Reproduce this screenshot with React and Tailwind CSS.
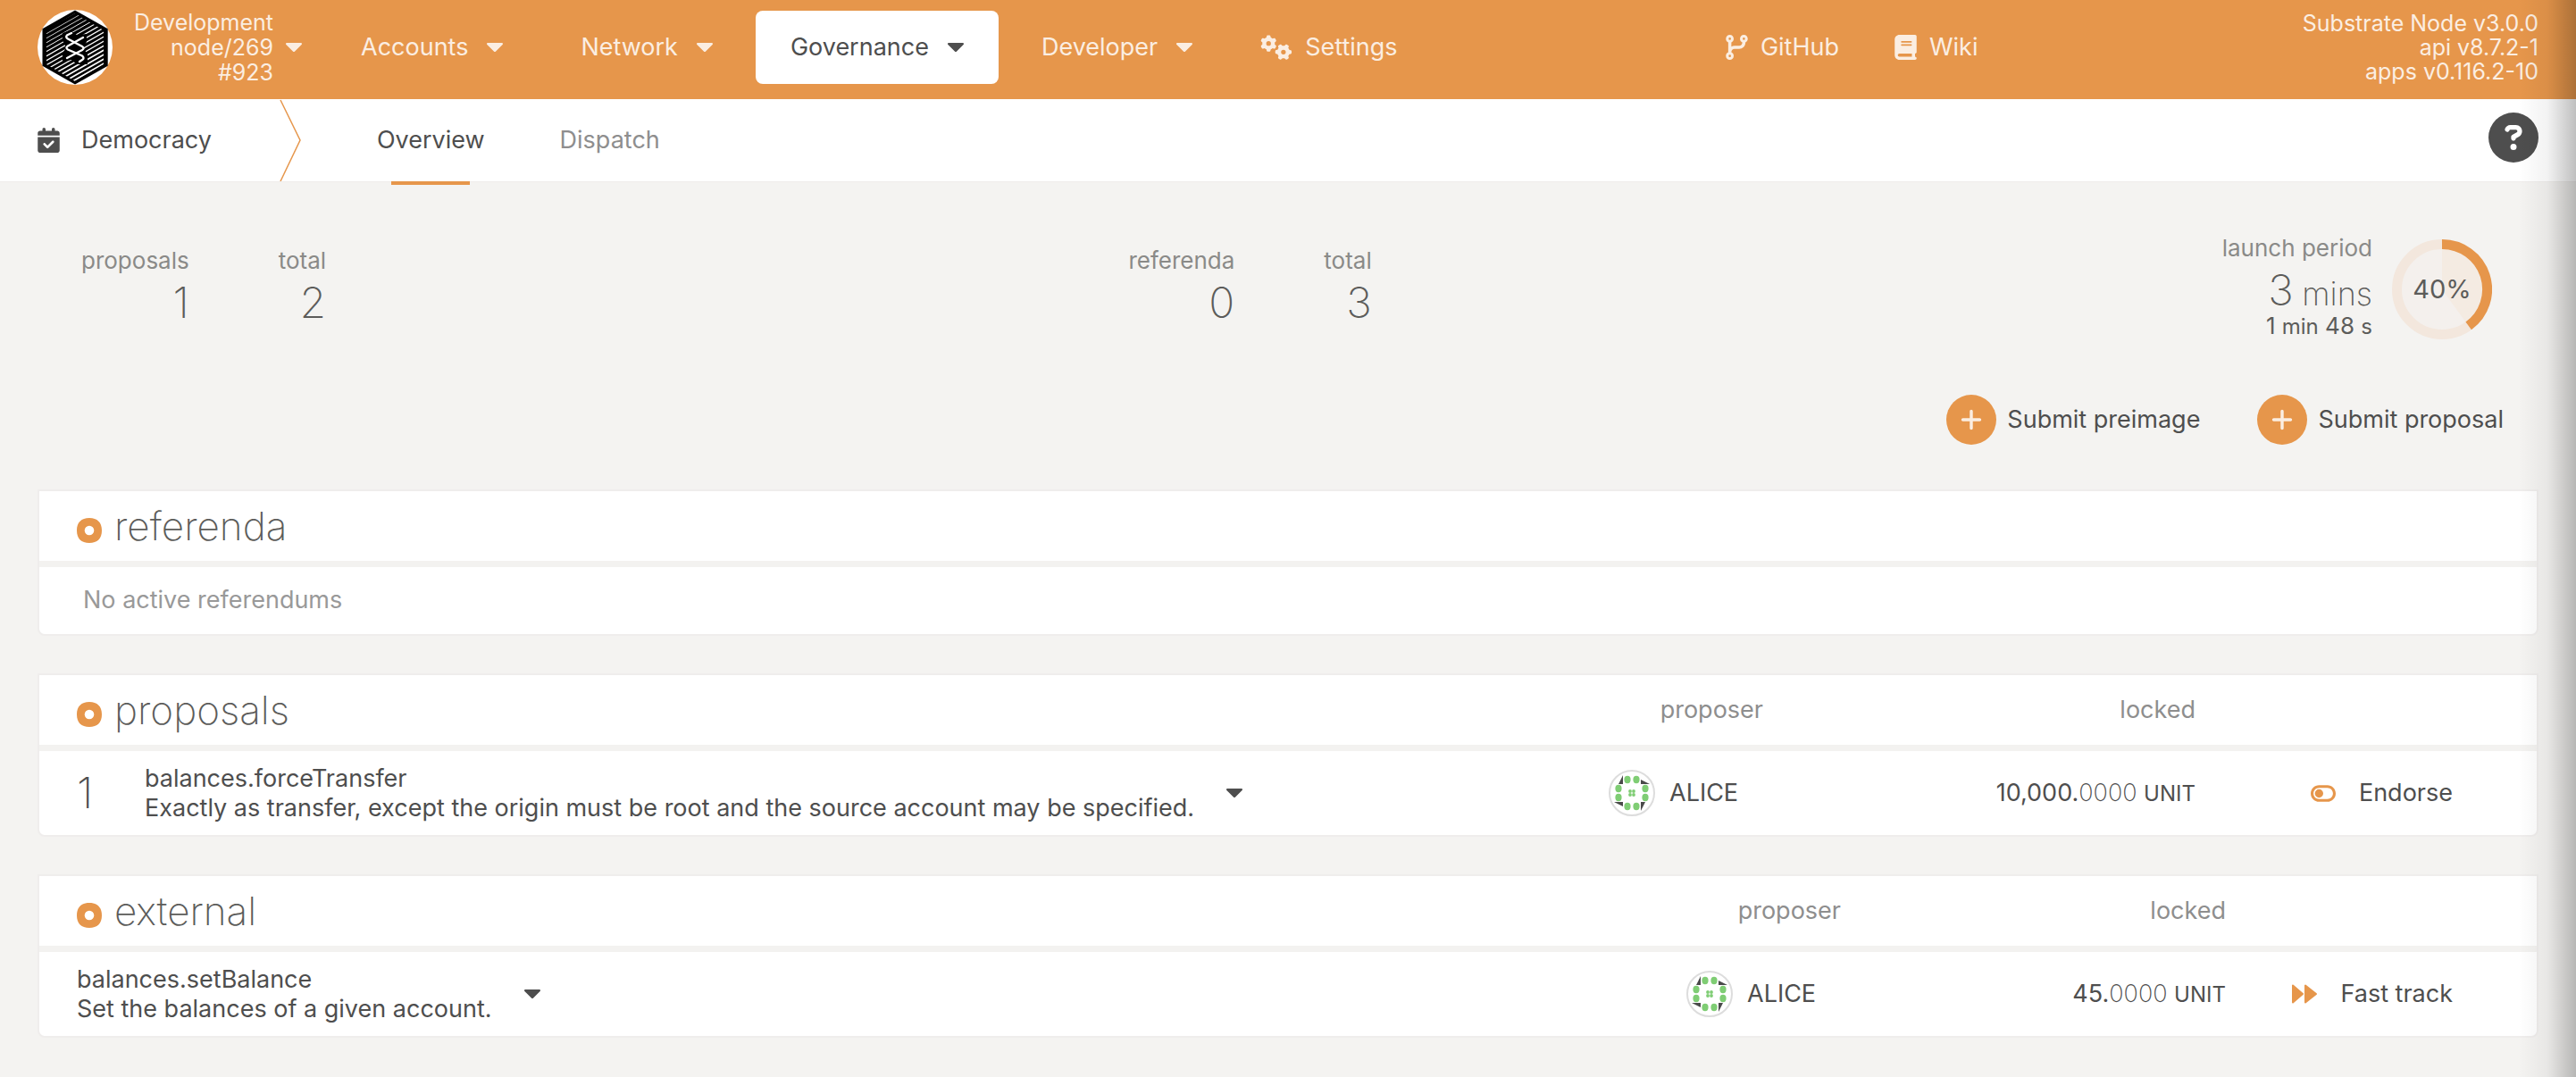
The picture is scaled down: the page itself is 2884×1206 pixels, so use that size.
import {
  FaBook,
  FaCalendarCheck,
  FaCircleQuestion,
  FaCodeBranch,
  FaGears,
  FaPlus,
  FaToggleOff,
} from 'react-icons/fa6';

const MENU = [
  { label: 'Accounts' },
  { label: 'Network' },
  { label: 'Governance', active: true },
  { label: 'Developer' },
];

function Caret() {
  return (
    <svg className="h-2.5 w-[18px] shrink-0 fill-current" viewBox="11 192 298 169" preserveAspectRatio="none" aria-hidden="true">
      <path d="M31.3 192h257.3c17.8 0 26.7 21.5 14.1 34.1L174.1 354.8c-7.8 7.8-20.5 7.8-28.3 0L17.2 226.1C4.6 213.5 13.5 192 31.3 192z" />
    </svg>
  );
}

function FastForward() {
  return (
    <svg className="h-[22px] w-7 shrink-0" viewBox="0 0 28 22" fill="#e6964b" stroke="#e6964b" strokeWidth="2" strokeLinejoin="round" aria-hidden="true">
      <path d="M1 1.5V20.5L12 11ZM15 1.5V20.5L27 11Z" />
    </svg>
  );
}

function Logo() {
  const stripes = Array.from({ length: 23 }, (_, i) => i);
  return (
    <svg className="size-[84px] shrink-0" viewBox="0 0 84 84" aria-hidden="true">
      <defs>
        <clipPath id="logo-hex">
          <path d="M42 4 74 23V61L42 80 10 61V23Z" />
        </clipPath>
      </defs>
      <circle cx="42" cy="42" r="42" fill="#fff" />
      <path d="M42 0.5 78.7 21.3V62.7L42 83.5 5.5 62.7V21.3Z" fill="#000" />
      <g clipPath="url(#logo-hex)" stroke="#fff">
        {stripes.map((i) => (
          <path key={i} d={`M6 ${14 + i * 5}L78 ${-27 + i * 5}`} strokeWidth={0.5 + i * 0.08} />
        ))}
      </g>
      <path d="M36 23 44 28 55 27V36L51 42 56 50V61H44L38 56 28 58V49L32 42 28 34V26Z" fill="#000" />
      <g fill="none" stroke="#fff" strokeWidth="2.4" strokeLinecap="round">
        <path d="M38 26 33 28.5Q31 30.5 34 32.5L50 41Q53 43 50 45L33 54" />
        <path d="M51 31 34 40.5Q31 42.5 34 44.5L50 51.5Q53 54 50 56L47 58" />
      </g>
    </svg>
  );
}

function Identicon() {
  const dots = [
    [21, 11], [31, 11], [41, 21], [41, 31],
    [31, 41], [21, 41], [11, 31], [11, 21],
  ];
  const core = [[24, 24], [28, 24], [24, 28], [28, 28]];
  return (
    <svg className="size-[52px] shrink-0" viewBox="0 0 52 52" aria-hidden="true">
      <circle cx="26" cy="26" r="25" fill="#fff" stroke="#ddd" strokeWidth="2" />
      <path d="M16 6V16H11ZM36 11 46 16H36ZM36 36H41L36 46ZM6 36H16V41Z" fill="#4a4a4a" />
      <g fill="#7fcd74">
        {dots.map(([x, y]) => <ellipse key={`${x}-${y}`} cx={x} cy={y} rx="3.6" ry="4.2" />)}
        {core.map(([x, y]) => <circle key={`${x}-${y}`} cx={x} cy={y} r="1.9" />)}
      </g>
    </svg>
  );
}

function Header() {
  return (
    <header className="flex items-center justify-between bg-[#e6964b] px-[42px] pt-[11px] pb-4 text-[#fbeee2]">
      <div className="flex items-center">
        <Logo />
        <button type="button" className="ml-3.5 flex items-center gap-3.5 text-right text-[25px] leading-7">
          <span className="w-[166px]">
            Development
            <br />
            node/269
            <br />
            #923
          </span>
          <Caret />
        </button>
        <nav className="ml-[27px] flex items-center gap-[9px]">
          {MENU.map(({ label, active }) => (
            <button
              key={label}
              type="button"
              className={
                active
                  ? 'flex h-[82px] items-center gap-[21px] rounded-lg bg-white px-[39px] text-[27px] text-[#4e4e4e]'
                  : 'flex h-[82px] items-center gap-[21px] px-[39px] text-[27px]'
              }
            >
              {label}
              <Caret />
            </button>
          ))}
          <a href="#settings" className="flex h-[82px] items-center gap-3.5 px-7 text-[27px]">
            <FaGears className="h-7 w-9" />
            Settings
          </a>
        </nav>
      </div>
      <div className="mr-6 flex items-center">
        <a href="#github" className="flex items-center gap-3.5 px-[31px] text-[27px]">
          <FaCodeBranch className="h-7 w-[25px]" />
          GitHub
        </a>
        <a href="#wiki" className="flex items-center gap-3.5 px-[31px] text-[27px]">
          <FaBook className="h-7 w-[25px]" />
          Wiki
        </a>
      </div>
      <div className="text-right text-[25px] leading-[27px]">
        Substrate Node v3.0.0
        <br />
        api v8.7.2-1
        <br />
        apps v0.116.2-10
      </div>
    </header>
  );
}

function TabBar() {
  return (
    <div className="flex h-[93px] items-center border-b border-[#efedeb] bg-white px-[42px] text-[27px] text-[#4e4e4e]">
      <FaCalendarCheck className="h-7 w-[25px]" />
      <h1 className="ml-6">Democracy</h1>
      <svg className="ml-[76px] h-full w-6" viewBox="0 0 24 92" fill="none" stroke="#e6964b" strokeWidth="1.5" aria-hidden="true">
        <path d="M1 1 23 46 1 92" />
      </svg>
      <nav className="ml-[43px] flex h-full">
        <a href="#overview" className="relative flex items-center px-[42px] after:absolute after:-bottom-1 after:left-1/2 after:h-1 after:w-[88px] after:-translate-x-1/2 after:bg-[#e6964b]">
          Overview
        </a>
        <a href="#dispatch" className="flex items-center px-[42px] text-[#8e8e8e]">Dispatch</a>
      </nav>
      <button type="button" aria-label="Help" className="mb-1.5 ml-auto">
        <FaCircleQuestion className="size-14" />
      </button>
    </div>
  );
}

function Stat({ label, value }) {
  return (
    <div className="text-right">
      <div className="text-[26px] leading-8 text-[#8a8a88]">{label}</div>
      <div className="text-5xl leading-[62px] font-extralight text-[#5c5c5a]">{value}</div>
    </div>
  );
}

function Donut() {
  return (
    <div className="grid size-28 place-items-center">
      <svg className="col-start-1 row-start-1 size-28" viewBox="0 0 112 112" aria-hidden="true">
        <circle cx="56" cy="56" r="50.5" fill="#f4f0ed" stroke="#f3e7dd" strokeWidth="11" />
        <path d="M56 56V11A45 45 0 0 1 82.5 92.4Z" fill="#f4ebe2" />
        <path d="M56 5.5A50.5 50.5 0 0 1 85.7 96.9" fill="none" stroke="#e6964b" strokeWidth="11" />
      </svg>
      <span className="col-start-1 row-start-1 text-[29px] text-[#5c5c5a]">40%</span>
    </div>
  );
}

function Summary() {
  return (
    <section className="grid grid-cols-[1172fr_763fr_763fr] pt-[58px] pr-[94px] pl-[91px]">
      <div className="flex gap-[100px] pt-3.5">
        <Stat label="proposals" value="1" />
        <Stat label="total" value="2" />
      </div>
      <div className="flex gap-[100px] pt-3.5">
        <Stat label="referenda" value="0" />
        <Stat label="total" value="3" />
      </div>
      <div className="flex justify-end gap-[22px]">
        <div className="text-right text-[#5c5c5a]">
          <div className="text-[26px] leading-8 text-[#8a8a88]">launch period</div>
          <div className="pt-1.5 text-5xl leading-[50px] font-extralight">
            3 <span className="-ml-1 text-4xl">mins</span>
          </div>
          <div className="text-[26px] leading-7">
            1 <span className="text-2xl">min</span> 48 <span className="text-2xl">s</span>
          </div>
        </div>
        <div className="pt-1.5">
          <Donut />
        </div>
      </div>
    </section>
  );
}

function SubmitButton({ children }) {
  return (
    <button type="button" className="flex items-center gap-3 text-[27px] text-[#4e4e4e]">
      <span className="grid size-14 place-items-center rounded-full bg-[#e6964b] text-[#fbeee2]">
        <FaPlus className="h-7 w-6" />
      </span>
      {children}
    </button>
  );
}

function Card({ title, columns, headers, children }) {
  return (
    <table className="w-full table-fixed border-separate border-spacing-0 overflow-hidden rounded-b-lg border-2 border-[#efedec] bg-white text-[27px] text-[#4e4e4e]">
      <colgroup>
        {columns.map((c, i) => <col key={i} className={c} />)}
      </colgroup>
      <thead>
        <tr>
          <th colSpan={columns.length - headers.length} className="h-[85px] border-b-[7px] border-[#f3f2f0] p-0 text-left font-normal">
            <h2 className="flex items-center gap-3.5 pl-[42px] text-[44px] leading-none font-extralight text-[#5c5c5a]">
              <svg className="mt-2.5 size-7" viewBox="0 0 28 28" aria-hidden="true">
                <path fillRule="evenodd" fill="#e6964b" d="M14 0C23 0 28 5 28 14S23 28 14 28 0 23 0 14 5 0 14 0ZM14 8.7A5.3 5.3 0 1 0 14 19.3 5.3 5.3 0 0 0 14 8.7Z" />
              </svg>
              {title}
            </h2>
          </th>
          {headers.map((h, i) => (
            <th key={i} className="border-b-[7px] border-[#f3f2f0] p-0 pr-6 text-right font-normal text-[#8e8e8e]">
              {h}
            </th>
          ))}
        </tr>
      </thead>
      <tbody>{children}</tbody>
    </table>
  );
}

function Call({ name, text }) {
  return (
    <button type="button" className="flex items-center gap-9 text-left leading-[33px]">
      <span>
        {name}
        <br />
        {text}
      </span>
      <Caret />
    </button>
  );
}

function Balance({ whole }) {
  return (
    <td className="p-0 pr-6 text-right">
      {whole}.<span className="font-extralight">0000</span> <span className="text-2xl">UNIT</span>
    </td>
  );
}

function Proposer() {
  return (
    <td className="p-0 pl-[23px]">
      <div className="flex items-center gap-4">
        <Identicon />
        ALICE
      </div>
    </td>
  );
}

function Action({ icon, children }) {
  return (
    <td className="p-0 pr-[94px]">
      <button type="button" className="ml-auto flex items-center gap-[26px]">
        {icon}
        {children}
      </button>
    </td>
  );
}

export default function App() {
  return (
    <div className="relative min-h-screen bg-[#f4f3f1] pb-11 font-[Inter,'Liberation_Sans',sans-serif]">
      <Header />
      <TabBar />
      <main>
        <Summary />
        <div className="mt-[60px] flex justify-end gap-16 pr-[81px]">
          <SubmitButton>Submit preimage</SubmitButton>
          <SubmitButton>Submit proposal</SubmitButton>
        </div>
        <div className="mt-[50px] flex flex-col gap-[42px] px-[42px]">
          <Card title="referenda" columns={['w-auto']} headers={[]}>
            <tr className="h-[75px]">
              <td className="p-0 pl-[49px] text-[#999]">No active referendums</td>
            </tr>
          </Card>
          <Card
            title="proposals"
            columns={['w-[94px]', 'w-auto', 'w-[220px]', 'w-[484px]', 'w-[358px]']}
            headers={['proposer', 'locked', '']}
          >
            <tr className="h-[94px]">
              <td className="p-0 pl-[42px] text-5xl font-extralight">1</td>
              <td className="p-0 pl-6">
                <Call
                  name="balances.forceTransfer"
                  text="Exactly as transfer, except the origin must be root and the source account may be specified."
                />
              </td>
              <Proposer />
              <Balance whole="10,000" />
              <Action icon={<FaToggleOff className="h-[25px] w-7 text-[#e6964b]" />}>Endorse</Action>
            </tr>
          </Card>
          <Card
            title="external"
            columns={['w-auto', 'w-[220px]', 'w-[431px]', 'w-[324px]']}
            headers={['proposer', 'locked', '']}
          >
            <tr className="h-[94px]">
              <td className="p-0 pl-[42px]">
                <Call name="balances.setBalance" text="Set the balances of a given account." />
              </td>
              <Proposer />
              <Balance whole="45" />
              <Action icon={<FastForward />}>Fast track</Action>
            </tr>
          </Card>
        </div>
      </main>
      <div className="pointer-events-none absolute inset-y-0 right-0 w-16 bg-linear-to-r from-transparent via-black/5 to-black/25" />
    </div>
  );
}
